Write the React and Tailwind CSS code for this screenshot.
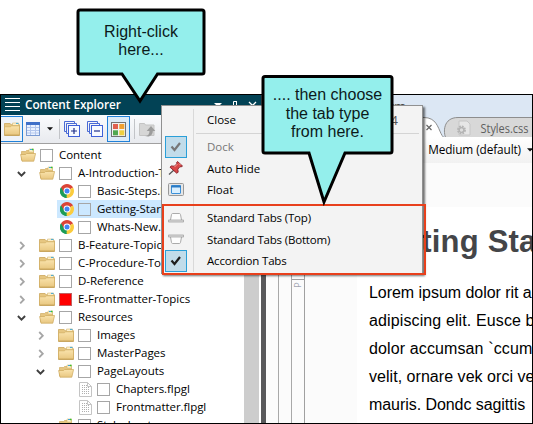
import React from "react";

const UI = "font-['Open_Sans','Noto_Sans',sans-serif]";

function Folder({ open }) {
  return (
    <svg width="16" height="14" viewBox="0 0 16 14" className="shrink-0">
      <defs>
        <linearGradient id="fold" x1="0" y1="0" x2="0" y2="1">
          <stop offset="0" stopColor="#fae3ac" />
          <stop offset="1" stopColor="#e8c780" />
        </linearGradient>
      </defs>
      {open ? (
        <>
          <path d="M1.500 12V3.500h4l1-1h7V12z" fill="#e6c680" stroke="#d0ac62" strokeWidth=".7" />
          <path d="M9 1h4.500v3H9z" fill="#fdf0cc" stroke="#d3b566" strokeWidth=".5" />
          <path d="M10 1.500h2" stroke="#3fa7d6" />
          <path d="M12 1.500h1.500" stroke="#35c02b" strokeWidth="1.400" />
          <path d="M.6 6.500h5l1-1h9L13.800 13.200H2z" fill="url(#fold)" stroke="#cba75c" strokeWidth=".7" />
        </>
      ) : (
        <>
          <path d="M.5 12.500v-11h5.600l1 1.300h8.400v9.700z" fill="#e6c680" stroke="#cba75c" strokeWidth=".8" />
          <path d="M8.500 1h6v2.500h-6z" fill="#fdf0cc" stroke="#cfae60" strokeWidth=".5" />
          <path d="M12 1.400H14.500" stroke="#3fa7d6" />
          <path d="M.5 13.200V4.800h6l1-1h8v9.400z" fill="url(#fold)" stroke="#d0ac62" strokeWidth=".7" />
          <path d="M.3 13.300h15.400" stroke="#b98f3c" strokeWidth=".8" />
        </>
      )}
    </svg>
  );
}

function Chrome() {
  return (
    <svg width="14" height="14" viewBox="0 0 14 14" className="shrink-0">
      <path d="M7 7L.94 3.500A7 7 0 0 1 13.060 3.500z" fill="#db4437" />
      <path d="M7 7L.94 3.500A7 7 0 0 0 7 14z" fill="#1c9c57" />
      <path d="M7 7l6.060-3.500A7 7 0 0 1 7 14z" fill="#fbcc3d" />
      <path d="M1 3.500L4 8.600 7 7V3.500z" fill="#db4437" />
      <path d="M4 8.700L7 14l3-5.300z" fill="#fbcc3d" />
      <path d="M.94 3.500L4 8.700 7 10.200 6.200 14A7 7 0 0 1 .94 3.500z" fill="#1c9c57" />
      <circle cx="7" cy="7" r="3.400" fill="#fff" />
      <circle cx="7" cy="7" r="2.500" fill="#4285f4" />
    </svg>
  );
}

function Page() {
  return (
    <svg width="13" height="15" viewBox="0 0 13 15" className="shrink-0">
      <path d="M.5.5h8l4 4v10H.5z" fill="#fff" stroke="#c4c4c4" />
      <path d="M8.500.5v4h4" fill="none" stroke="#c4c4c4" />
      <path d="M3 3.500h5M3 5.500h8M3 7.500h8M3 9.500h8M3 11.500h8" stroke="#b0b0b0" strokeDasharray="1 1" />
    </svg>
  );
}

function Chevron({ open }) {
  return (
    <svg width="9" height="9" viewBox="0 0 9 9" className="shrink-0">
      {open ? (
        <path d="M.9 3l3.600 3.600L8.100 3" fill="none" stroke="#404040" strokeWidth="1.900" />
      ) : (
        <path d="M3.200 1l3.600 3.700L3.200 8.400" fill="none" stroke="#a6a6a6" strokeWidth="1.800" />
      )}
    </svg>
  );
}

const indents = ["pl-0", "pl-[19px]", "pl-[38px]", "pl-[57px]"];

const rows = [
  { d: 0, icon: "open", label: "Content" },
  { d: 1, icon: "open", chev: "open", label: "A-Introduction-Topics" },
  { d: 2, icon: "chrome", label: "Basic-Steps.htm" },
  { d: 2, icon: "chrome", label: "Getting-Started.htm", selected: true },
  { d: 2, icon: "chrome", label: "Whats-New.htm" },
  { d: 1, icon: "closed", chev: "closed", label: "B-Feature-Topics" },
  { d: 1, icon: "closed", chev: "closed", label: "C-Procedure-Topics" },
  { d: 1, icon: "closed", chev: "closed", label: "D-Reference" },
  { d: 1, icon: "closed", chev: "closed", label: "E-Frontmatter-Topics", red: true },
  { d: 1, icon: "open", chev: "open", label: "Resources" },
  { d: 2, icon: "closed", chev: "closed", label: "Images" },
  { d: 2, icon: "closed", chev: "closed", label: "MasterPages" },
  { d: 2, icon: "open", chev: "open", label: "PageLayouts" },
  { d: 3, icon: "page", label: "Chapters.flpgl" },
  { d: 3, icon: "page", label: "Frontmatter.flpgl" },
  { d: 2, icon: "open", label: "Stylesheets" },
];

function TreeRow({ row }) {
  return (
    <div className={"flex h-[18px] shrink-0 items-center " + indents[row.d]}>
      <span className="flex w-[18px] shrink-0 items-center pt-px">
        {row.chev && (
          <span className="-ml-[3px]">
            <Chevron open={row.chev === "open"} />
          </span>
        )}
      </span>
      <div className={"flex h-[18px] items-center pl-px " + (row.selected ? "bg-[#cce8ff]" : "")}>
        <span className="flex w-5 shrink-0 items-center justify-start">
          {row.icon === "chrome" ? <span className="pl-[2px]"><Chrome /></span> : row.icon === "page" ? <span className="pl-[2px]"><Page /></span> : <Folder open={row.icon === "open"} />}
        </span>
        <span className={"mt-px h-[13px] w-[13px] shrink-0 border " + (row.red ? "border-[#c06060] bg-[#ff0000]" : "border-[#a6a6a6]")} />
        <span className="ml-[6px] whitespace-nowrap pr-1 text-[11.500px] leading-[18px] tracking-[-0.05px] text-black">{row.label}</span>
      </div>
    </div>
  );
}

function StackIcon({ plus }) {
  return (
    <svg width="16" height="16" viewBox="0 0 16 16">
      <path d="M.5 10.500V.5h10M2.500 12.500v-10h10" fill="none" stroke="#4a6bd5" />
      <path d="M.5 10.500H2.500M10.500.5v2M2.500 12.500H5M12.500 2.500v2" stroke="#4a6bd5" />
      <rect x="4.500" y="4.500" width="11" height="11" fill="#f7faff" stroke="#3f60d8" />
      <path d={plus ? "M7 10h6M10 7v6" : "M7 10h6"} stroke="#1f2f8a" strokeWidth="1.200" />
    </svg>
  );
}

function Toolbar() {
  return (
    <div className="flex h-[29px] shrink-0 items-center border-b border-[#a0a0a0] bg-[linear-gradient(#fafbfd,#e8eaee)]">
      <div className="flex h-[26px] w-[22px] items-center justify-center border border-l-0 border-[#2080d8] bg-[#eff3f8]">
        <Folder />
      </div>
      <svg className="ml-[3px]" width="14" height="14" viewBox="0 0 14 14">
        <rect x=".5" y=".5" width="13" height="13" fill="#eaf2ff" stroke="#7a9ad2" />
        <path d="M0 0h14v3H0z" fill="#3f70c8" />
        <path d="M1 5.500h12M1 8.500h12M1 11h12M4.500 3v10M9.500 3v10" stroke="#b3c6ec" />
      </svg>
      <svg className="ml-[7px]" width="6" height="4" viewBox="0 0 6 4"><path d="M0 .3h6L3 3.600z" fill="#111" /></svg>
      <span className="ml-[6px] mr-[4px] h-[20px] w-px bg-[#c2c4c8]" />
      <StackIcon plus />
      <span className="w-[7px]" />
      <StackIcon />
      <div className="ml-[4px] flex h-[26px] w-[23px] items-center justify-center border border-[#2080d8] bg-[#dcebf8]">
        <svg width="15" height="15" viewBox="0 0 15 15">
          <rect x=".5" y=".5" width="14" height="14" fill="#f2f2f2" stroke="#747474" />
          <rect x="2" y="2" width="5" height="5" fill="#e06050" />
          <rect x="8.300" y="2" width="5" height="5" fill="#f0a030" />
          <rect x="2" y="8.300" width="5" height="5" fill="#50a850" />
          <rect x="8.300" y="8.300" width="5" height="5" fill="#f0d040" />
        </svg>
      </div>
      <span className="ml-[4px] mr-[4px] h-[20px] w-px bg-[#c2c4c8]" />
      <svg width="17" height="15" viewBox="0 0 17 15">
        <path d="M.5 13.500v-12h5l1 1.500H15v10.500z" fill="#d6d6d6" stroke="#c4c4c4" />
        <path d="M6 14c3 0 4.500-2 4.500-5H7.700L12 4l4.300 5h-2.500c0 3-2 5.500-5 5.500z" fill="#9c9c9c" />
      </svg>
    </div>
  );
}

function Explorer() {
  return (
    <div className="flex w-[260px] shrink-0 flex-col">
      <div className="flex h-5 shrink-0 items-center bg-[#024255] pl-[4px]">
        <svg width="15" height="14" viewBox="0 0 15 14" className="shrink-0">
          <path d="M0 .5h15M0 4.500h15M0 8.500h15M0 12.500h15" stroke="#fff" />
        </svg>
        <span className="ml-[5px] whitespace-nowrap text-[11.800px] font-semibold tracking-[-0.06px] text-white">Content Explorer</span>
        <svg className="ml-auto mr-[3px] mt-[1px]" width="44" height="12" viewBox="0 0 44 12">
          <path d="M0 3h8L4 7z" fill="#fff" />
          <path d="M19.500 9V1.500h3V9M22.500 1v8M17 9.500h8" fill="none" stroke="#fff" />
          <path d="M35 2l7 7M42 2l-7 7" stroke="#fff" strokeWidth="1.300" />
        </svg>
      </div>
      <Toolbar />
      <div className="flex min-h-0 flex-1 overflow-hidden">
        <div className="flex w-[243px] flex-col overflow-hidden pt-[2px]">
          {rows.map((r) => <TreeRow key={r.label} row={r} />)}
        </div>
        <div className="w-[15px] bg-[#cdcdcd]" />
      </div>
    </div>
  );
}

function Editor() {
  return (
    <div className="flex min-w-0 flex-1 flex-col overflow-hidden">
      <div className="flex h-[42px] shrink-0 flex-col justify-between bg-[#dce7f4]">
        <span className="pl-[112px] pt-px text-[13px] leading-[20px] text-[#4a4a4a]">.htm</span>
        <svg className="shrink-0" width="266" height="22" viewBox="0 0 266 22">
          <path d="M180 22.500c-3-6-3-21 12-21h80v21z" fill="#d8d8d8" stroke="#8d8d8d" />
          <path d="M-2 22V1.500h160c12 0 14 10 17 16 1.500 3 3 5 6 5z" fill="#fff" stroke="#8d8d8d" />
          <path d="M-2 22h184" stroke="#fff" />
          <path d="M160.500 9l5 5M165.500 9l-5 5" stroke="#666" strokeWidth="1.200" />
          <path d="M193 5h8l3 3v11h-11z" fill="#e6e6e6" stroke="#c6c6c6" />
          <circle cx="195.500" cy="14" r="3.200" fill="#ddd" stroke="#b4b4b4" strokeWidth="2.500" strokeDasharray="1.600 .9" />
          <circle cx="195.500" cy="14" r="2.400" fill="none" stroke="#b4b4b4" strokeWidth="1.300" />
          <text x="214.500" y="16.500" fontSize="11.700" fill="#5e5e5e" textLength="48" lengthAdjust="spacingAndGlyphs" fontFamily="Open Sans">Styles.css</text>
        </svg>
      </div>
      <div className="flex h-[26px] shrink-0 items-center justify-end bg-[linear-gradient(#ffffff,#f1f1f1)] pb-px">
        <span className="whitespace-nowrap text-[11.800px] tracking-[-0.1px] text-black">Medium (default)</span>
        <svg className="ml-[6px] mr-[-1px]" width="6" height="4" viewBox="0 0 6 4"><path d="M0 .3h6L3 3.600z" fill="#111" /></svg>
      </div>
      <div className="flex min-h-0 flex-1 bg-[#fbfbfb]">
        <div className="w-[13px] shrink-0 border-r border-[#a8a8a8]" />
        <div className="w-[13px] shrink-0 border-r border-[#a8a8a8]" />
        <div className="flex w-[13px] shrink-0 flex-col border-r border-[#a0a0a0] pt-[116px]">
          <div className="flex h-[30px] justify-center border-t border-[#a0a0a0] pt-[1px]">
            <span className="h-[8px] -rotate-90 text-[9px] leading-[8px] text-[#a0a4b0]">P</span>
          </div>
        </div>
        <div className="w-[52px] shrink-0" />
        <div className="mt-[44px] min-w-0 flex-1 overflow-hidden bg-white pl-[12px] pt-[17px] font-['Liberation_Sans',Arial,sans-serif]">
          <div className="whitespace-nowrap text-[31px] font-bold leading-[36px] tracking-[0.2px] text-[#444548]">Getting Started</div>
          <div className="mt-[19px] whitespace-nowrap text-[16px] leading-[28px] text-black">
            <div className="tracking-[-0.04px]">Lorem ipsum dolor rit amet</div>
            <div className="tracking-[0.12px]">adipiscing elit. Eusce blandit</div>
            <div className="tracking-[0.12px]">dolor accumsan `ccumsan</div>
            <div className="tracking-[0.04px]">velit, ornare vek orci vel</div>
            <div className="tracking-[-0.06px]">mauris. Dondc sagittis</div>
          </div>
        </div>
      </div>
    </div>
  );
}

function Check({ dim }) {
  return (
    <span className="flex h-[22px] w-[22px] items-center justify-center border border-[#2a9fd8] bg-[#c1dcea]">
      <svg width="12" height="12" viewBox="0 0 12 12"><path d="M1.500 5.500l3 3.500 5.500-7" fill="none" stroke={dim ? "#777" : "#1e1e1e"} strokeWidth="2.200" /></svg>
    </span>
  );
}

function Pin() {
  return (
    <svg width="16" height="16" viewBox="0 0 16 16">
      <path d="M1 14.500l5-4.500" stroke="#555" strokeWidth="1.300" />
      <path d="M9.500 1.500L14.500 6l-1.500 1-1-.4-2.200 2.600.4 3-1.500 1L2 7.200l1.200-1.300 3 .3L9 3.800l-.5-1z" fill="#d94848" stroke="#872028" strokeWidth=".9" />
      <path d="M6.500 7l3-3M11 3.500l1.500 1.500" stroke="#ff9b93" />
    </svg>
  );
}

function WindowIcon() {
  return (
    <svg width="16" height="13" viewBox="0 0 16 13">
      <rect x=".5" y=".5" width="15" height="12" rx="1" fill="#e6e6e6" stroke="#999" />
      <rect x="3.500" y="2.500" width="9" height="8" rx=".5" fill="#d9efff" stroke="#3b90d8" />
      <path d="M3 3.500h10" stroke="#2b7ac4" strokeWidth="2" />
    </svg>
  );
}

function TabIcon({ flip }) {
  return (
    <svg width="16" height="10" viewBox="0 0 16 10" className={flip ? "-scale-y-100" : ""}>
      <path d="M2.500 7L3.500 1.500Q3.700.5 4.700.5h6.600q1 0 1.200 1l1 5.500" fill="#fdfdfd" stroke="#ababab" />
      <path d="M.4 7h15.200v2H.4z" fill="#ddd" stroke="#999" strokeWidth=".7" />
    </svg>
  );
}

function Item({ icon, label, dim, tight }) {
  return (
    <div className="flex h-[21.600px] items-center">
      <span className="flex h-full w-[32px] shrink-0 items-center justify-center border-r border-[#d9d9d9] pr-[3px]">{icon}</span>
      <span className={"ml-[13px] whitespace-nowrap text-[11.500px] " + (dim ? "text-[#777] " : "text-black ") + (tight ? "tracking-[-0.18px]" : "")}>{label}</span>
    </div>
  );
}

function Separator() {
  return (
    <div className="flex h-[5px] items-center">
      <span className="h-full w-[32px] border-r border-[#d9d9d9]" />
      <span className="ml-[2px] mr-[3px] h-px flex-1 bg-[#d4d4d4]" />
    </div>
  );
}

function ContextMenu() {
  return (
    <div className="absolute left-[161px] top-[105px] flex h-[169px] w-[262px] flex-col border border-[#909090] bg-[#f3f3f3] pt-[3px] shadow-[2px_2px_2px_rgba(0,0,0,0.55)]">
      <div className="flex">
        <Item label="Close" />
        <span className="ml-auto mr-[24px] text-[13px] leading-[22px] text-[#555]">4</span>
      </div>
      <Separator />
      <Item icon={<Check dim />} label="Dock" dim />
      <Item icon={<Pin />} label="Auto Hide" />
      <Item icon={<WindowIcon />} label="Float" />
      <div className="h-px w-[32px] border-r border-[#d9d9d9]" />
      <Separator />
      <Item icon={<TabIcon />} label="Standard Tabs (Top)" tight />
      <Item icon={<TabIcon flip />} label="Standard Tabs (Bottom)" tight />
      <Item icon={<Check />} label="Accordion Tabs" tight />
    </div>
  );
}

function Callouts() {
  return (
    <div className="pointer-events-none absolute inset-0 font-['Liberation_Sans',Arial,sans-serif] text-[16px] leading-[18.500px] text-[#0c1a1a]">
      <svg className="absolute inset-0" width="533" height="424" viewBox="0 0 533 424">
        <path d="M80 10h122q2 0 2 2v60q0 2-2 2h-44.500l-17.500 27-18-27H80q-2 0-2-2V12q0-2 2-2z" fill="#94efec" stroke="#000" strokeWidth="3" />
        <path d="M265 76.500h125q2 0 2 2v72.500q0 2-2 2h-45L324 202l-15-49h-44q-2 0-2-2V78.500q0-2 2-2z" fill="#94efec" stroke="#000" strokeWidth="3" />
      </svg>
      <div className="absolute left-[79px] top-[23px] w-[124px] text-center leading-[18px]">Right-click<br />here...</div>
      <div className="absolute left-[264px] top-[86px] w-[127px] whitespace-nowrap text-center">.... then choose<br />the tab type<br />from here.</div>
    </div>
  );
}

export default function App() {
  return (
    <div className={"relative flex h-[424px] w-[533px] flex-col overflow-hidden bg-white pt-[94px] " + UI}>
      <div className="flex min-h-0 flex-1 border border-black">
        <Explorer />
        <div className="w-[5px] shrink-0 bg-[#58585a]" />
        <Editor />
      </div>
      <ContextMenu />
      <div className="absolute left-[162px] top-[204px] h-[71px] w-[264px] border-2 border-[#e8401c]" />
      <Callouts />
    </div>
  );
}
